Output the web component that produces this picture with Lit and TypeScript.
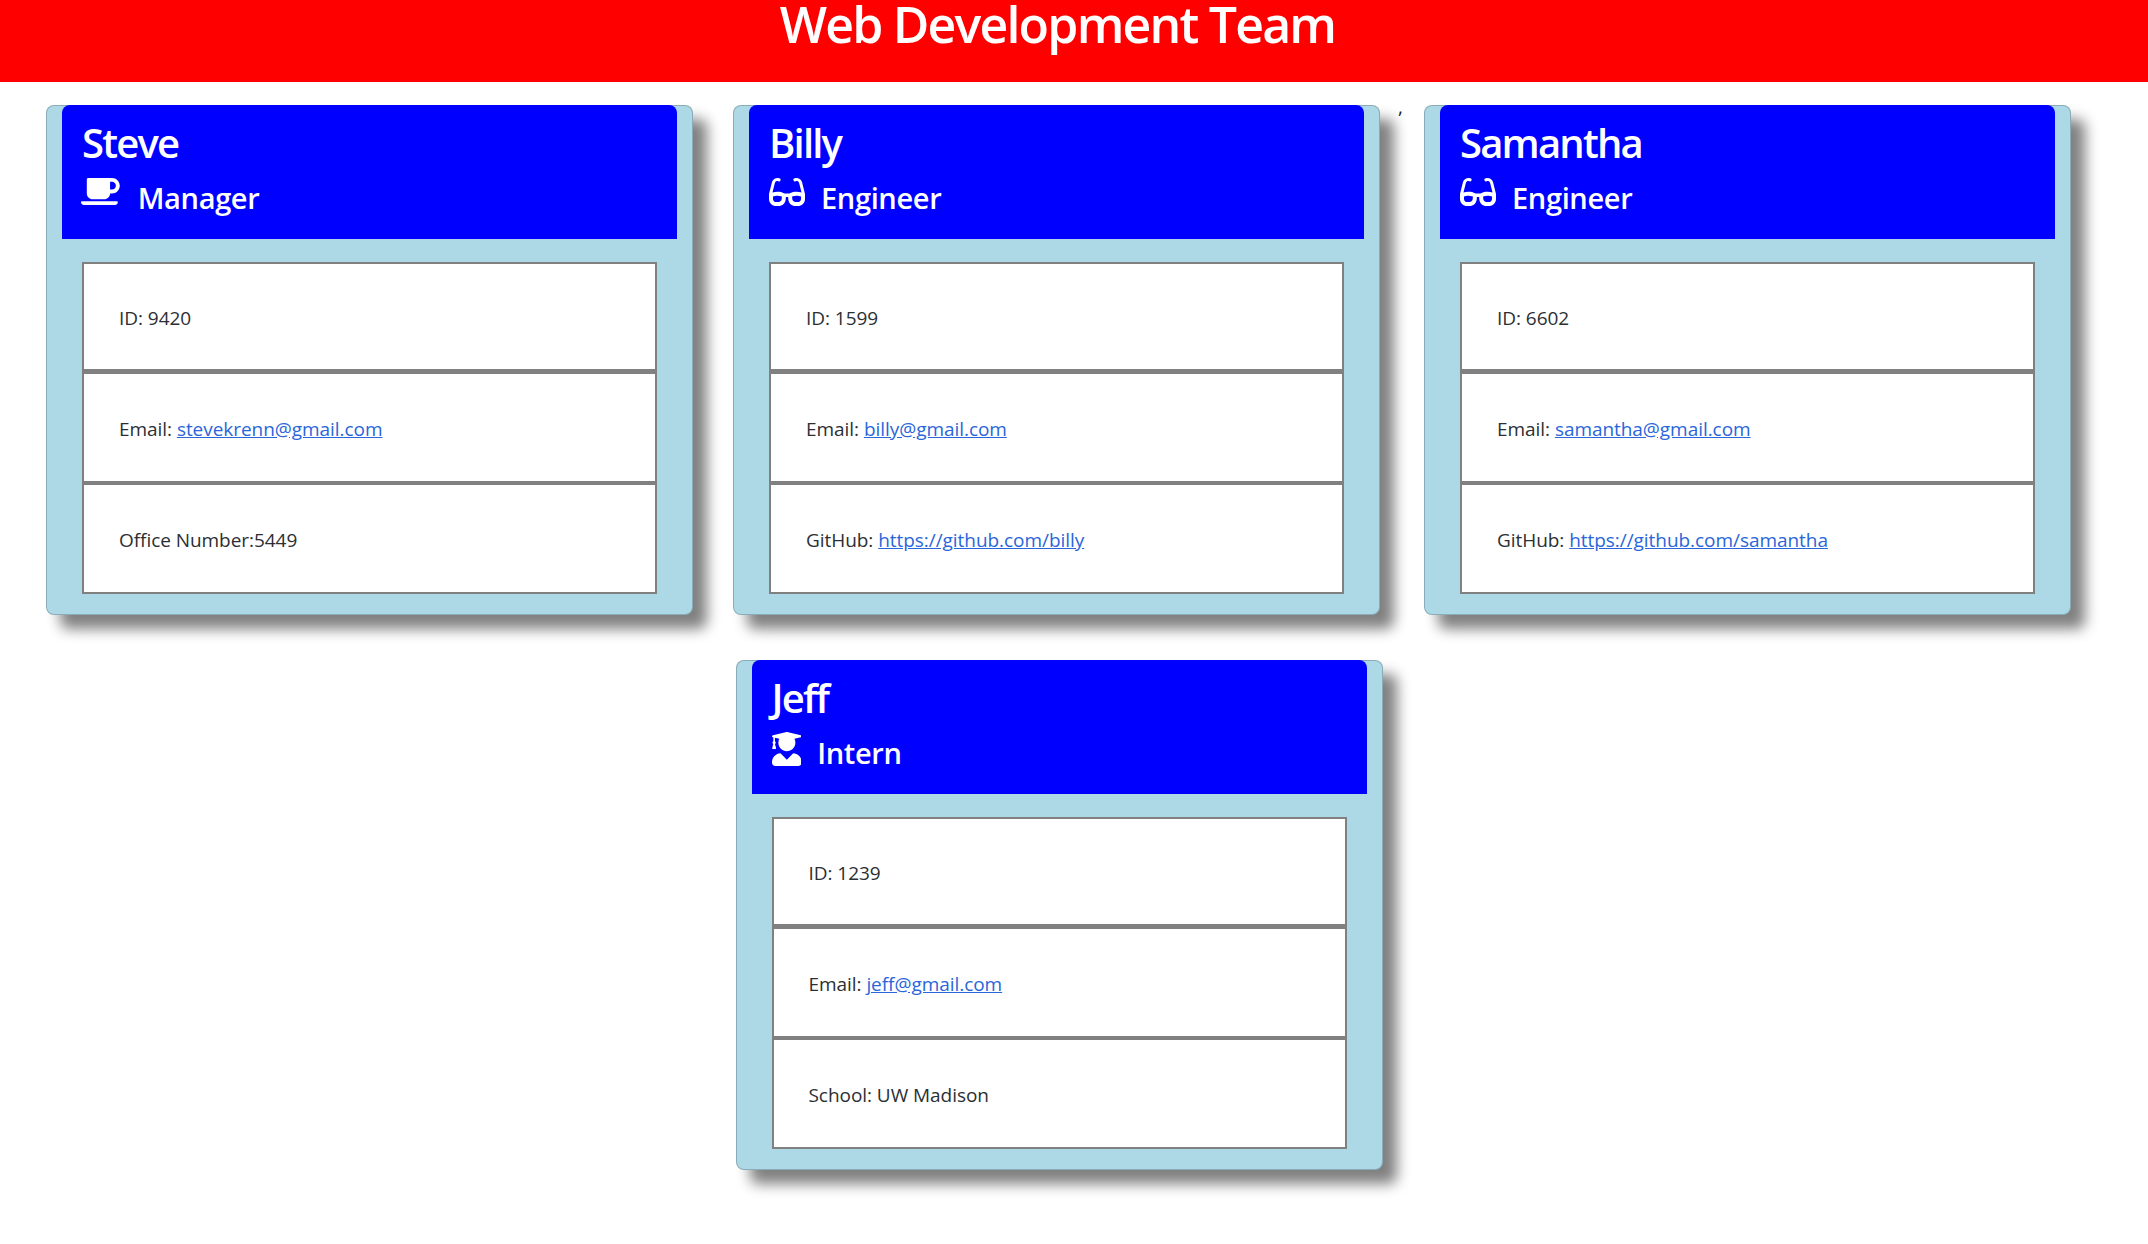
import { LitElement, html, css, svg } from "lit";
import { customElement } from "lit/decorators.js";

const ICONS: Record<string, { vb: string; d: string; cls: string }> = {
  Manager: { vb: "0 0 640 512", cls: "mug", d: "M192 384h192c53 0 96-43 96-96h32c70.6 0 128-57.4 128-128S582.6 32 512 32H120c-13.3 0-24 10.7-24 24v232c0 53 43 96 96 96zM512 96c35.3 0 64 28.7 64 64s-28.7 64-64 64h-32V96h32zm47.7 384H48.3c-47.6 0-61-64-36-64h583.3c25 0 11.8 64-35.9 64z" },
  Engineer: { vb: "0 0 576 512", cls: "glasses", d: "M574.1 280.37L528.75 98.66c-5.91-23.7-21.59-44.05-43-55.81-21.44-11.73-46.97-14.11-70.19-6.33l-15.25 5.08c-8.39 2.79-12.92 11.86-10.12 20.24l5.06 15.18c2.79 8.38 11.85 12.91 20.23 10.12l13.18-4.39c10.87-3.62 23-3.57 33.16 1.73 10.29 5.37 17.57 14.56 20.37 25.82l38.46 153.82c-22.19-6.81-49.79-12.46-81.2-12.46-34.77 0-73.98 7.02-114.85 26.74h-73.18c-40.87-19.74-80.08-26.75-114.86-26.75-31.42 0-59.02 5.65-81.21 12.46l38.46-153.82c2.79-11.25 10.09-20.45 20.38-25.81 10.16-5.3 22.28-5.35 33.15-1.73l13.17 4.39c8.38 2.79 17.44-1.74 20.23-10.12l5.06-15.18c2.8-8.38-1.73-17.45-10.12-20.24l-15.25-5.08c-23.22-7.78-48.75-5.41-70.19 6.33-21.41 11.77-37.09 32.11-43 55.8L1.9 280.37A64.218 64.218 0 0 0 0 295.86v70.25C0 429.56 51.58 480 115.2 480h37.12c60.28 0 110.37-45.94 114.88-105.37l2.93-38.63h35.75l2.93 38.63C313.31 434.06 363.4 480 423.68 480h37.12c63.62 0 115.2-50.44 115.2-113.88v-70.25c0-5.23-.64-10.43-1.9-15.5zm-370.72 89.42c-1.97 25.91-24.4 46.21-51.06 46.21H115.2C86.97 416 64 393.62 64 366.11v-37.54c18.12-6.49 43.42-12.92 72.58-12.92 23.86 0 47.26 4.33 69.93 12.92l-3.13 41.22zM512 366.12c0 27.51-22.97 49.88-51.2 49.88h-37.12c-26.67 0-49.1-20.3-51.06-46.21l-3.13-41.22c22.67-8.59 46.08-12.92 69.95-12.92 29.12 0 54.43 6.44 72.55 12.93v37.54z" },
  Intern: { vb: "0 0 448 512", cls: "grad", d: "M319.4 320.6L224 416l-95.4-95.4C57.1 323.7 0 382.2 0 454.4v9.6c0 26.5 21.5 48 48 48h352c26.5 0 48-21.5 48-48v-9.6c0-72.2-57.1-130.7-128.6-133.8zM13.6 79.8l6.4 1.5v58.4c-7 4.2-12 11.5-12 20.3 0 8.4 4.6 15.4 11.1 19.7L3.5 242c-1.7 6.9 2.1 14 7.6 14h41.8c5.5 0 9.3-7.1 7.6-14l-15.6-62.3C51.4 175.4 56 168.4 56 160c0-8.8-5-16.1-12-20.3V87.1l66 15.9c-8.6 17.2-14 36.4-14 57 0 70.7 57.3 128 128 128s128-57.3 128-128c0-20.6-5.3-39.8-14-57l96.3-23.2c18.2-4.4 18.2-27.1 0-31.5l-190.4-46c-13-3.1-26.7-3.1-39.7 0L13.6 48.2c-18.1 4.4-18.1 27.2 0 31.6z" },
};

type Member = { name: string; role: string; id: string; email: string; extra: unknown };

const team: Member[] = [
  { name: "Steve", role: "Manager", id: "9420", email: "stevekrenn@gmail.com", extra: html`Office Number:5449` },
  { name: "Billy", role: "Engineer", id: "1599", email: "billy@gmail.com", extra: html`GitHub: <a href="#">https://github.com/billy</a>` },
  { name: "Samantha", role: "Engineer", id: "6602", email: "samantha@gmail.com", extra: html`GitHub: <a href="#">https://github.com/samantha</a>` },
  { name: "Jeff", role: "Intern", id: "1239", email: "jeff@gmail.com", extra: html`School: UW Madison` },
];

@customElement("app-root")
export class AppRoot extends LitElement {
  static styles = css`
    :host {
      display: block;
      min-height: 1244px;
      background: #fff;
      font-family: "Open Sans", "Noto Sans", sans-serif;
      color: #2b2f33;
    }
    .banner {
      height: 82px;
      background: #f00;
    }
    .banner h1 {
      width: 2115px;
      margin: 0;
      text-align: center;
      color: #fff;
      font-size: 50px;
      line-height: 49px;
      font-weight: 600;
      letter-spacing: -1.8px;
    }
    .rows {
      position: relative;
      width: 2118px;
      padding-top: 23px;
    }
    .row {
      display: flex;
      justify-content: center;
      margin-bottom: 45px;
    }
    .row.top {
      justify-content: flex-start;
      padding-left: 46px;
      gap: 40px;
    }
    .row.top .card:last-child {
      margin-left: 4px;
    }
    .card {
      box-sizing: border-box;
      width: 647px;
      padding: 0 15px;
      background: #add8e6;
      border: 1px solid rgba(0, 0, 0, 0.2);
      border-radius: 8px;
      box-shadow: 14px 14px 14px #808080;
    }
    .head {
      box-sizing: border-box;
      height: 134px;
      margin-top: -1px;
      padding: 10px 20px 0;
      background: #00f;
      color: #fff;
      border-radius: 8px 8px 0 0;
    }
    .name {
      margin: 0;
      font-size: 40px;
      line-height: 56px;
      font-weight: 600;
      letter-spacing: -1.8px;
    }
    .role {
      margin: 0;
      display: flex;
      align-items: flex-start;
      gap: 16px;
      font-size: 29px;
      line-height: 40px;
      font-weight: 600;
      letter-spacing: -0.35px;
    }
    .role .label {
      margin-top: 7px;
    }
    svg {
      display: block;
      fill: #fff;
      height: 32px;
      margin-top: 5px;
    }
    svg.mug {
      height: 31px;
      margin-left: -1px;
      margin-right: 2px;
    }
    svg.grad {
      height: 34px;
      margin-top: 6px;
    }
    .list {
      margin: 23px 20px 20px;
      background: #fff;
      font-size: 19px;
      letter-spacing: -0.05px;
    }
    .item {
      box-sizing: border-box;
      display: flex;
      align-items: center;
      height: 107px;
      padding: 2px 35px 0;
      border: 2px solid #808080;
      border-bottom: 0;
    }
    .item:nth-child(2) {
      border-top-width: 5px;
      height: 112px;
    }
    .item:nth-child(3) {
      border-top-width: 4px;
      height: 113px;
      border-bottom: 2px solid #808080;
    }
    a {
      color: #2a66d9;
      text-decoration: underline;
    }
    .stray {
      position: absolute;
      left: 1398px;
      top: 13px;
      font-size: 19px;
      line-height: 24px;
      color: #222;
    }
  `;

  private card(m: Member) {
    const ic = ICONS[m.role];
    return html`<section class="card">
      <header class="head">
        <h2 class="name">${m.name}</h2>
        <h3 class="role">
          <svg class=${ic.cls} viewBox=${ic.vb}>${svg`<path d=${ic.d}></path>`}</svg>
          <span class="label">${m.role}</span>
        </h3>
      </header>
      <div class="list">
        <div class="item"><span>ID: ${m.id}</span></div>
        <div class="item"><span>Email: <a href="#">${m.email}</a></span></div>
        <div class="item"><span>${m.extra}</span></div>
      </div>
    </section>`;
  }

  render() {
    return html`
      <div class="banner"><h1>Web Development Team</h1></div>
      <main class="rows">
        <span class="stray">,</span>
        <div class="row top">${team.slice(0, 3).map((m) => this.card(m))}</div>
        <div class="row">${this.card(team[3])}</div>
      </main>
    `;
  }
}
